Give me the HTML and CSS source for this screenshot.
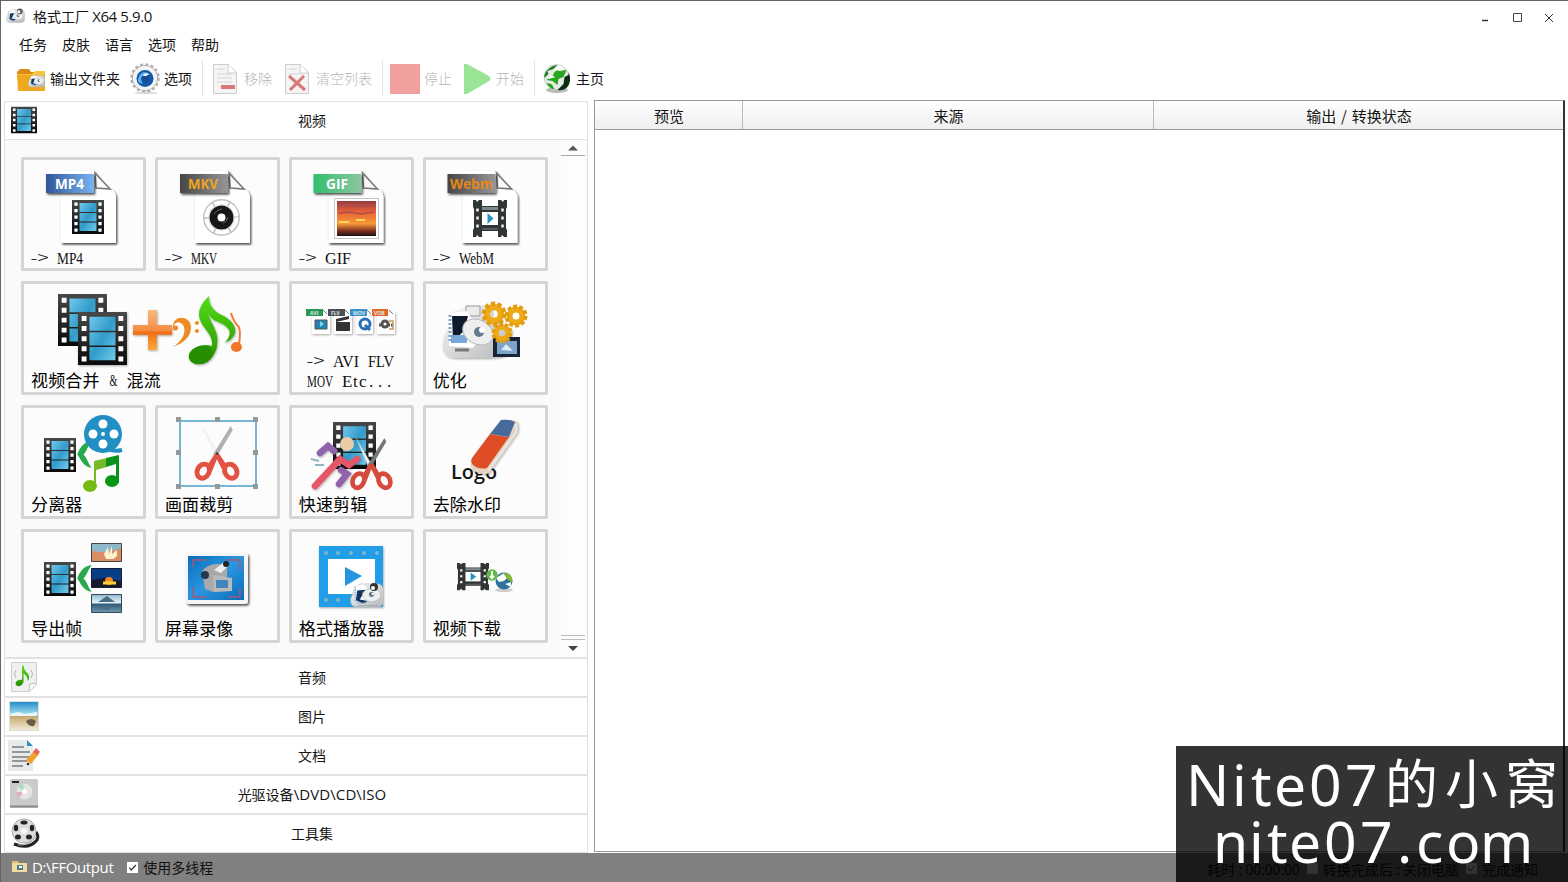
FILE: index.html
```html
<!DOCTYPE html>
<html lang="zh-CN">
<head>
<meta charset="utf-8">
<title>格式工厂 X64 5.9.0</title>
<link rel="stylesheet" href="styles.css">
</head>
<body>
<svg class="defs" width="0" height="0" aria-hidden="true">
<defs>
<linearGradient id="blue" x1="0" y1="0" x2="1" y2="1"><stop offset="0" stop-color="#70c8ee"/><stop offset=".5" stop-color="#329bc9"/><stop offset="1" stop-color="#70cced"/></linearGradient>
<linearGradient id="dark" x1="0" y1="0" x2="0" y2="1"><stop offset="0" stop-color="#484848"/><stop offset="1" stop-color="#080808"/></linearGradient>
<linearGradient id="tagBlue"><stop offset="0" stop-color="#31579c"/><stop offset="1" stop-color="#77b4ef"/></linearGradient>
<linearGradient id="tagGrey"><stop offset="0" stop-color="#464646"/><stop offset="1" stop-color="#969696"/></linearGradient>
<linearGradient id="tagGreen"><stop offset="0" stop-color="#32bf6d"/><stop offset="1" stop-color="#8cc6a2"/></linearGradient>
<linearGradient id="sunset" x1="0" y1="0" x2="0" y2="1"><stop offset="0" stop-color="#923c40"/><stop offset=".3" stop-color="#e75f34"/><stop offset=".65" stop-color="#f79a38"/><stop offset=".85" stop-color="#813023"/><stop offset="1" stop-color="#1b1114"/></linearGradient>
<linearGradient id="orange" x1="0" y1="0" x2="0" y2="1"><stop offset="0" stop-color="#f9bb7e"/><stop offset=".52" stop-color="#f48a40"/><stop offset=".55" stop-color="#ef6d16"/><stop offset="1" stop-color="#fbab3c"/></linearGradient>
<linearGradient id="green" x1="0" y1="0" x2="0" y2="1"><stop offset="0" stop-color="#53dc18"/><stop offset="1" stop-color="#279100"/></linearGradient>
<linearGradient id="silver" x1="0" y1="0" x2="1" y2="1"><stop offset="0" stop-color="#fafafa"/><stop offset="1" stop-color="#b5b8bb"/></linearGradient>
<linearGradient id="screen" x1="0" y1="0" x2="1" y2="1"><stop offset="0" stop-color="#086dbd"/><stop offset=".5" stop-color="#2b96df"/><stop offset="1" stop-color="#086bba"/></linearGradient>
<linearGradient id="sky" x1="0" y1="0" x2="0" y2="1"><stop offset="0" stop-color="#248dcc"/><stop offset=".45" stop-color="#a9e0ed"/><stop offset=".5" stop-color="#c3a66b"/><stop offset="1" stop-color="#f1e9d7"/></linearGradient>
<linearGradient id="lake" x1="0" y1="0" x2="0" y2="1"><stop offset="0" stop-color="#93b8ce"/><stop offset=".45" stop-color="#e4f0f4"/><stop offset=".55" stop-color="#355c77"/><stop offset="1" stop-color="#7098b0"/></linearGradient>
<filter id="shade" x="-20%" y="-20%" width="150%" height="150%"><feDropShadow dx="1.3" dy="1.7" stdDeviation=".9" flood-opacity=".7"/></filter>
<filter id="softshade" x="-20%" y="-20%" width="150%" height="150%"><feDropShadow dx=".7" dy="1" stdDeviation=".8" flood-opacity=".35"/></filter>
<symbol id="film" viewBox="0 0 32 34" preserveAspectRatio="none"><path fill="url(#dark)" d="M0 0h32v34H0z"/><path fill="url(#blue)" d="M7.5 3h17v9h-17zM7.5 13h17v8.500h-17zM7.500 22.500h17V31h-17z"/><path stroke="#fff" stroke-width="3.200" stroke-dasharray="3.200 3.300" d="M4 2.500v30M28 2.500v30"/></symbol>
<symbol id="playfilm" viewBox="0 0 34 38" preserveAspectRatio="none"><path fill="#303536" d="M0 0h3l1 2 2-2h3v6h16V0h3l2 2 1-2h3v7l-1 2v19l1 2v7h-3l-2-2-1 2h-3v-6H9v6H6l-2-2-1 2H0v-7l1-2V9L0 7z"/><path fill="#7f888c" d="M9 7h16v3H9z"/><path fill="#535b5e" d="M9 28h16v2H9z"/><path fill="#fff" d="M9 12h16v13H9z"/><path fill="#2794bd" d="M14.500 13v11l6-5.500z"/><path stroke="#eee" stroke-width="2.500" stroke-dasharray="3 5" d="M4.500 8.500v24M29.500 8.500v24"/></symbol>
<symbol id="paper" viewBox="0 0 74 76"><g filter="url(#shade)"><path fill="#fff" d="M16 1h33l12 17q11 1 10 13v42H16z"/></g><path fill="#fafafa" stroke="#777" stroke-width="1.600" d="M50 3l15 16-14-1z"/></symbol>
<symbol id="robot" viewBox="0 0 52 38"><path fill="url(#silver)" stroke="#bbb" d="M8 7l8-5h28q7 2 7 11v17q-2 7-8 7H9Q0 36 1 25z"/><path fill="#fff" d="M9 5l12-2 7 9v16H7z"/><path fill="#123862" d="M11 12l13-1-9 15 12 2-7 4-11-5z"/><path stroke="#6fa0d0" stroke-width="2" stroke-dasharray="2 2" d="M8 6v24M11 31h14"/><ellipse cx="33" cy="19" rx="14" ry="10" fill="#edf0f1" stroke="#aeb5b9"/><circle cx="33" cy="18" r="4" fill="#67788a"/><circle cx="35" cy="17" r="2" fill="#fff"/><path stroke="#999" d="M12 35h31"/></symbol>
<symbol id="chevron" viewBox="0 0 14 28"><path fill="#29a94e" d="M14 1C5 2 2 9 0 14c3 3 4 11 14 13-4-5-4-9-8-13 4-4 4-8 8-13z"/></symbol>
<symbol id="scissors" viewBox="0 0 46 58"><path fill="#f4f4f3" stroke="#e9e9e7" stroke-width=".5" d="M9 3l17 28-4 2z"/><path fill="#aeb0b2" d="M37 1l2 4-16 27-4-2z"/><g fill="none" stroke="#e25243" stroke-width="5"><ellipse cx="9" cy="47" rx="6" ry="7.500" transform="rotate(28 9 47)"/><ellipse cx="37" cy="47" rx="6" ry="7.500" transform="rotate(-28 37 47)"/></g><path fill="#e25243" d="M21 29l3 3-6 15-5-6zM25 29l8 12-5 4-7-14z"/><circle cx="23" cy="29" r="1.300" fill="#333"/></symbol>
<symbol id="gear" viewBox="-12 -12 24 24"><circle r="6.500" fill="none" stroke="#edaa16" stroke-width="6"/><circle r="9.500" fill="none" stroke="#e29c10" stroke-width="4" stroke-dasharray="3.700 2.270"/></symbol>
<symbol id="globe" viewBox="0 0 30 30"><circle cx="15" cy="14" r="12.500" fill="#e4ece4" stroke="#bbb" stroke-width=".6"/><path fill="#2b7d2e" d="M5 8q5-6 11-6l-4 4-6 2 1 3-4 4Q2 12 5 8z"/><path fill="#0d2c10" d="M27 9q4 9-2 16-4 3-9 2l6-6 1-7 4-2z"/><path fill="#27a820" d="M13 9l5-3 7 1-3 7-5 2-1 6-5-4-6-1 6-4zM5 20l5 1 3 5Q8 26 5 20z"/><path fill="#fff" d="M18 2l6 5-6 1-5-2zM9 12l5 2-7 2z"/></symbol>
<symbol id="note" viewBox="0 0 24 32"><path fill="url(#green)" d="M10 2h2q1 8 6 11 4 6 0 11 0-8-6-11v12q-2 6-8 6-4-1-3-5 2-5 9-4z"/></symbol>
</defs>
</svg>
<div class="window">
<header class="titlebar">
<svg class="app-icon" viewBox="0 0 20 20"><use href="#robot" x="0" y="1" width="20" height="17"/><circle cx="14.500" cy="4.500" r="3" fill="#555a5c"/><circle cx="13.500" cy="5" r="1.600" fill="#fff"/></svg>
<h1 class="title">格式工厂 <span class="ui">X64 5.9.0</span></h1>
<svg class="controls" viewBox="1476 8 84 18"><path stroke="#333" stroke-width="1.500" d="M1482 20.500h6"/><path fill="none" stroke="#444" d="M1513.500 13.500h8v8h-8z"/><path stroke="#333" d="M1545 14l8 8m0-8l-8 8"/></svg>
</header>
<nav class="menu"><span>任务</span><span>皮肤</span><span>语言</span><span>选项</span><span>帮助</span></nav>
<div class="toolbar">
<div class="tool"><svg viewBox="16 62 32 32"><path fill="#d98b13" d="M17 72l3-3h9l2 3h14v19H19z"/><path fill="#efa921" d="M17 75h28v16H18z"/><path fill="#f8c440" d="M17 74h15l3-3h10v4H17z"/><use href="#robot" x="28" y="74" width="17" height="14"/></svg><span>输出文件夹</span></div>
<div class="tool"><svg viewBox="130 62 32 32"><ellipse cx="146" cy="93" rx="12" ry="1.500" fill="#ddd"/><circle cx="145" cy="78" r="12.500" fill="#f4f4f4" stroke="#aaa"/><circle cx="145" cy="78" r="13.500" fill="none" stroke="#b1b1b1" stroke-width="2.500" stroke-dasharray="3 2.300"/><circle cx="145" cy="78" r="12" fill="#f4f4f4"/><circle cx="145" cy="78.500" r="8.500" fill="#1458ab"/><path fill="#62b6ef" d="M138 80c1-8 8-10 12-5-9-1-11 3-7 9-4-1-5-2-5-4z"/><circle cx="146" cy="79" r="3.500" fill="#194c91"/><path fill="#fff" d="M143 76q1-4 6-2l-3 2z"/></svg><span>选项</span></div>
<i class="sep"></i>
<div class="tool off"><svg viewBox="210 62 32 32"><path fill="#f4f4f4" stroke="#ccc" d="M213.500 64.500h15l8 8v21h-23z"/><path fill="#fff" stroke="#ccc" d="M228 64v9h8"/><path stroke="#dedede" stroke-width="1.500" d="M217 69h8m-8 5h15m-15 4h15m-15 4h15"/><path fill="#dc7878" d="M221 85h14v4h-14z"/></svg><span>移除</span></div>
<div class="tool off"><svg viewBox="282 62 32 32"><path fill="#f4f4f4" stroke="#ccc" d="M285.500 64.500h15l8 8v21h-23z"/><path fill="#fff" stroke="#ccc" d="M300 64v9h8"/><path stroke="#dedede" stroke-width="1.500" d="M289 69h8m-8 5h15"/><path stroke="#d87878" stroke-width="3" d="M289 76l16 14m-1-14l-14 14"/></svg><span>清空列表</span></div>
<i class="sep"></i>
<div class="tool off"><svg viewBox="390 62 32 32"><path fill="#f2a09e" d="M390 64h30v30h-30z"/></svg><span>停止</span></div>
<div class="tool off"><svg viewBox="462 62 32 32"><path fill="#99e595" d="M464 64l3 0 22 12q3 3 0 5l-22 13h-3z"/></svg><span>开始</span></div>
<i class="sep"></i>
<div class="tool"><svg viewBox="543 62 32 32"><ellipse cx="558" cy="90" rx="11" ry="3" fill="#bbb"/><use href="#globe" x="542" y="63" width="31" height="30"/></svg><span>主页</span></div>
</div>
<main class="main">
<aside class="sidebar">
<div class="section-head"><svg viewBox="5 102 38 38"><use href="#film" x="11" y="106.500" width="26" height="27"/></svg><span>视频</span></div>
<div class="gallery">
<div class="tiles">
<div class="tile"><svg viewBox="24 160 119 108"><use href="#paper" x="45" y="170" width="74" height="76"/><path filter="url(#shade)" fill="url(#tagBlue)" d="M46 174h48v19H46z"/><text x="55" y="189" class="tag" fill="#fff" textLength="29" lengthAdjust="spacingAndGlyphs">MP4</text><use href="#film" x="72" y="200" width="32" height="34"/><text class="arrow" x="30.500" y="264" textLength="18" lengthAdjust="spacingAndGlyphs">-&gt;</text><text class="latin" x="57" y="264" textLength="26" lengthAdjust="spacingAndGlyphs">MP4</text></svg></div>
<div class="tile"><svg viewBox="158 160 119 108"><use href="#paper" x="179" y="170" width="74" height="76"/><path filter="url(#shade)" fill="url(#tagGrey)" d="M180 174h48v19h-48z"/><text x="188" y="189" class="tag" fill="#f0a520" textLength="30" lengthAdjust="spacingAndGlyphs">MKV</text><g fill="none"><circle cx="221.500" cy="217.500" r="15.500" stroke="#c2c2c2" stroke-width="6"/><circle cx="221.500" cy="217.500" r="15" stroke="#fff" stroke-width="4" stroke-dasharray="14 1.700"/><circle cx="221.500" cy="217.500" r="8" stroke="#171717" stroke-width="8"/><path stroke="#666" d="M214 214q4-5 8-5m6 8q-1 5-5 6"/></g><text class="arrow" x="164.500" y="264" textLength="18" lengthAdjust="spacingAndGlyphs">-&gt;</text><text class="latin" x="191" y="264" textLength="26" lengthAdjust="spacingAndGlyphs">MKV</text></svg></div>
<div class="tile"><svg viewBox="292 160 119 108"><use href="#paper" x="312.500" y="170" width="74" height="76"/><path filter="url(#shade)" fill="url(#tagGreen)" d="M313.500 174h48v19h-48z"/><text x="326" y="189" class="tag" fill="#fff" textLength="22" lengthAdjust="spacingAndGlyphs">GIF</text><path fill="#fff" stroke="#aaa" stroke-width=".7" d="M334.500 198.500h44v40h-44z"/><path fill="url(#sunset)" d="M337 201h39v35h-39z"/><path fill="none" stroke="#ad4c4d" stroke-width="1.500" d="M338 206l11-2 11 3 15-3M339 213l12-1 9 2 14-2"/><path stroke="#fbd45b" stroke-width="2" d="M339 222h10m7-2h9"/><text class="arrow" x="298.500" y="264" textLength="18" lengthAdjust="spacingAndGlyphs">-&gt;</text><text class="latin" x="325" y="264" textLength="26" lengthAdjust="spacingAndGlyphs">GIF</text></svg></div>
<div class="tile"><svg viewBox="426 160 119 108"><use href="#paper" x="446.500" y="170" width="74" height="76"/><path filter="url(#shade)" fill="url(#tagGrey)" d="M447.500 174h48v19h-48z"/><text x="450" y="189" class="tag" fill="#e88718" textLength="43" lengthAdjust="spacingAndGlyphs">Webm</text><use href="#playfilm" x="473" y="200" width="34" height="38"/><text class="arrow" x="432.500" y="264" textLength="18" lengthAdjust="spacingAndGlyphs">-&gt;</text><text class="latin" x="459" y="264" textLength="35" lengthAdjust="spacingAndGlyphs">WebM</text></svg></div>
<div class="tile wide"><svg viewBox="24 284 253 108"><use href="#film" x="58" y="294" width="49" height="52"/><g filter="url(#softshade)"><use href="#film" x="78" y="312" width="49" height="53"/></g><g filter="url(#softshade)"><path fill="url(#orange)" d="M148 310h9v15h15v10h-15v15h-9v-15h-15v-10h15z"/></g><path fill="#ef8a25" d="M173 328c-1-14 17-13 18-2 1 10-7 17-18 21 9-6 13-13 11-20-2-6-9-6-10-1 3-2 6 2 3 4-3 2-4-1-4-2z"/><circle cx="197" cy="323" r="2" fill="#ef8a25"/><circle cx="197" cy="331" r="2" fill="#ef8a25"/><g filter="url(#softshade)"><path fill="url(#green)" d="M209 296c0 11 6 16 15 20 14 8 16 20 1 27 10-12 3-17-9-22-3-1-7-5-8-8 3 12 12 18 9 34-3 12-11 18-20 17-10-2-11-11-2-16 5-3 11-4 17-2 2-13-12-18-13-31 0-8 5-14 10-19z"/><ellipse cx="201" cy="355" rx="12" ry="9" fill="#258f00" transform="rotate(-18 201 355)"/></g><path fill="none" stroke="#f4763b" stroke-width="2" d="M231 313q3 9 8 14 2 6 0 18"/><ellipse cx="236.500" cy="347" rx="5.500" ry="5" fill="#f17427"/></svg><p>视频合并 <svg class="amp" viewBox="0 0 9 20"><text class="latin" x=".5" y="16" textLength="8" lengthAdjust="spacingAndGlyphs">&amp;</text></svg> 混流</p></div>
<div class="tile"><svg viewBox="292 284 119 108"><g filter="url(#softshade)" fill="#fff"><path d="M312 312h18v22h-18zM334 312h18v22h-18zM356 312h17v22h-17zM377 312h18v22h-18z"/></g><path fill="#299656" d="M306 309h17v7h-17z"/><path fill="#4c4f51" d="M328 309h17v7h-17z"/><path fill="#3a91cd" d="M350 309h17v7h-17z"/><path fill="#e8672b" d="M372 309h16v7h-16z"/><g class="mini"><text x="310" y="315">AVI</text><text x="331" y="315">FLV</text><text x="353" y="315">MOV</text><text x="374" y="315">VOB</text></g><path fill="none" stroke="#777" d="M323 310l4 4m18-4l4 4m18-4l4 4m18-4l4 4"/><path fill="#2485b2" stroke="#555" stroke-width="1" d="M315 320h12v9h-12z"/><path fill="#83d4ed" d="M320 321v6l4-3z"/><path fill="#333" d="M336 322h14v9h-14zM336 319l13-3v3l-13 3z"/><circle cx="365" cy="324" r="5" fill="none" stroke="#2871b7" stroke-width="3"/><path stroke="#2871b7" stroke-width="3" d="M365 325l5 5"/><path stroke="#555" stroke-width="3" stroke-dasharray="2 1" d="M379 325h14"/><circle cx="385" cy="324" r="4.500" fill="#555"/><circle cx="385" cy="324" r="1.500" fill="#fff"/><path fill="none" stroke="#c59a55" stroke-width="1.500" d="M389 321h4v8h-4"/><text class="arrow" x="306.500" y="367" textLength="18" lengthAdjust="spacingAndGlyphs">-&gt;</text><text class="latin" x="333" y="367" textLength="26" lengthAdjust="spacingAndGlyphs">AVI</text><text class="latin" x="368" y="367" textLength="26" lengthAdjust="spacingAndGlyphs">FLV</text><text class="latin" x="307" y="387" textLength="26" lengthAdjust="spacingAndGlyphs">MOV</text><text class="latin" x="342 353 359 369 378 387" y="387">Etc...</text></svg></div>
<div class="tile"><svg viewBox="426 284 119 108"><g filter="url(#softshade)"><path fill="url(#silver)" d="M450 313l20-7h22v10l20 14-4 24q-5 4-24 4h-29q-13-1-12-14 1-12 7-17z"/></g><path fill="#ececec" stroke="#999" d="M466 306h14v10h-14z"/><path fill="#fff" d="M449 314l18-3 15 25-9 12-24-2z"/><path fill="#0d1b2d" d="M452 316h16l-4 15-11 10z"/><path fill="#7aa7da" d="M451 335h16v8h-16z"/><path stroke="#7ba4cc" stroke-width="3" stroke-dasharray="2 2" d="M450 315v28"/><ellipse cx="478" cy="332" rx="16" ry="12" fill="#eee" stroke="#bbb" transform="rotate(27 478 332)"/><circle cx="479" cy="332" r="5" fill="#67798d"/><circle cx="482" cy="330" r="3" fill="#fff"/><path stroke="#777" stroke-width="3" d="M455 350h14"/><path fill="#182536" d="M493 337h27v20h-27z"/><path fill="#7ca4ca" d="M497 341h20v13h-20z"/><path fill="#dcecf4" d="M501 350l5-6 7 7z"/><use href="#gear" x="481" y="301" width="26" height="26"/><use href="#gear" x="504" y="304" width="24" height="24"/><use href="#gear" x="491" y="322" width="22" height="22"/></svg><p>优化</p></div>
<div class="tile"><svg viewBox="24 408 119 108"><use href="#film" x="44" y="438" width="32" height="34"/><use href="#chevron" x="77" y="440" width="15" height="29"/><circle cx="103" cy="434" r="19" fill="#218ec4"/><path fill="none" stroke="#218ec4" stroke-width="4" d="M108 449q6 3 14 1"/><g fill="#fff"><circle cx="103" cy="424" r="4.500"/><circle cx="93" cy="434" r="4.500"/><circle cx="114" cy="434" r="4.500"/><circle cx="103" cy="444" r="4.500"/><circle cx="103" cy="434" r="2"/></g><path fill="#78b92b" d="M94 461l13-3v9l-11 3v17h-2z"/><path fill="#099219" d="M106 458l13-3v28h-3v-19l-10 3z"/><ellipse cx="90" cy="486" rx="7" ry="6" fill="#74bc14"/><ellipse cx="112" cy="481" rx="7" ry="6" fill="#079516"/></svg><p>分离器</p></div>
<div class="tile"><svg viewBox="158 408 119 108"><path fill="none" stroke="#76b7d8" stroke-width="2" d="M180 421h76v65h-76z"/><path fill="#969999" d="M176 417h5v5h-5zm39 0h5v5h-5zm38 0h5v5h-5zm-77 33h5v5h-5zm77 0h5v5h-5zm-77 34h5v5h-5zm39 0h5v5h-5zm38 0h5v5h-5z"/><use href="#scissors" x="194" y="425" width="46" height="57"/></svg><p>画面裁剪</p></div>
<div class="tile"><svg viewBox="292 408 119 108"><use href="#film" x="333" y="422" width="43" height="47"/><circle cx="347" cy="444" r="7" fill="#e9cba6"/><g filter="url(#softshade)" fill="none" stroke-linecap="round" stroke-width="6.500"><path stroke="#9064aa" d="M320 453l8-7 6 5M341 470l6 4-8 10"/><path stroke="#e55668" d="M315 486l25-27 9 6 8-6"/></g><path stroke="#8eb4bd" stroke-width="2" d="M311 459l8 2m-4 4h9"/><g transform="translate(350 437) scale(.93)"><path fill="#eef0f1" stroke="#bbb" stroke-width=".5" d="M7 2l17 29-4 2z"/><path fill="#777" d="M37 1l2 4-16 27-4-2z"/><g fill="none" stroke="#d54b3e" stroke-width="5"><ellipse cx="9" cy="47" rx="6" ry="8" transform="rotate(25 9 47)"/><ellipse cx="37" cy="47" rx="6" ry="8" transform="rotate(-28 37 47)"/></g><path fill="#d54b3e" d="M21 28l3 4-6 15-5-6zM25 28l8 13-5 4-7-14z"/></g></svg><p>快速剪辑</p></div>
<div class="tile"><svg viewBox="426 408 119 108"><text x="451" y="479" class="logo" textLength="46" lengthAdjust="spacingAndGlyphs">Logo</text><g filter="url(#softshade)"><path fill="#e5d3bd" d="M502 420q13-1 16 3v9l-29 41q-5 3-15-2-5-4-2-8z"/><path fill="#df4e26" d="M490 434q9 2 19 3l-22 31q-8 2-14-3-3-3-1-7z"/><path fill="#476b9d" d="M490 434l11-14q9-1 14 2l-6 15z"/></g><path fill="none" stroke="#e6e8ed" stroke-width="2" d="M488 471l28-39v-8"/></svg><p>去除水印</p></div>
<div class="tile"><svg viewBox="24 532 119 108"><use href="#film" x="44" y="562" width="32" height="34"/><use href="#chevron" x="77" y="564" width="15" height="29"/><path fill="#d98d65" stroke="#444" d="M91.500 543.500h30v18h-30z"/><path fill="#8eb9c8" d="M92 544h29v4q-14 6-29 3z"/><path fill="#fff2ce" d="M104 554l4-7 1 7 3-8v8l5-4v6l-4 3h-7z"/><path fill="#073e86" stroke="#181d36" d="M91.500 568.500h30v19h-30z"/><path fill="#18192b" d="M92 580l12-2 17 3v6H92z"/><circle cx="109" cy="581" r="4" fill="#f08b24"/><path stroke="#ffd03b" stroke-width="3" d="M103 583h13"/><path fill="url(#lake)" stroke="#34495a" d="M91.500 594.500h30v18h-30z"/><path fill="#466d85" d="M98 602l9-6 8 6zM97 607h17l-7 3z"/></svg><p>导出帧</p></div>
<div class="tile"><svg viewBox="158 532 119 108"><g filter="url(#shade)"><rect x="186" y="553" width="62" height="51" rx="3" fill="#f4f5f6"/></g><path fill="url(#screen)" d="M188 556h56v44h-56z"/><path fill="none" stroke="#a45a75" stroke-width="1.500" d="M193 567v-7h13m21 0h13v10m0 18v9h-12m-22 0h-13v-10"/><path fill="#a7a9ab" d="M202 571q7-8 17-7l8 3v22l-14 3-8-3z"/><path fill="#eee" d="M214 570l10-8 4 4-7 7z"/><path fill="#bababa" d="M213 575l19 3v13l-18 1z"/><path fill="#4384ba" d="M216 580h12v8h-12z"/><circle cx="205" cy="575" r="4" fill="#27384c"/><circle cx="226" cy="564" r="3" fill="#222"/></svg><p>屏幕录像</p></div>
<div class="tile"><svg viewBox="292 532 119 108"><g filter="url(#softshade)"><path fill="#239de7" d="M319 546h64v61h-64z"/></g><path fill="#fff" d="M328 559h47v35h-47z"/><g fill="#7db5cb"><circle cx="326" cy="553" r="2"/><circle cx="338" cy="553" r="2"/><circle cx="351" cy="553" r="2"/><circle cx="364" cy="553" r="2"/><circle cx="377" cy="553" r="2"/><circle cx="326" cy="600" r="2"/><circle cx="338" cy="600" r="2"/></g><path fill="#2396dd" d="M345 567v19l17-10z"/><use href="#robot" x="350" y="582" width="34" height="26"/><circle cx="374" cy="587" r="4" fill="#333"/><circle cx="373" cy="588" r="2" fill="#fff"/></svg><p>格式播放器</p></div>
<div class="tile"><svg viewBox="426 532 119 108"><use href="#playfilm" x="457" y="563" width="32" height="28"/><ellipse cx="504" cy="590" rx="9" ry="2" fill="#ccc"/><circle cx="504" cy="581" r="8.500" fill="#2d719b"/><path fill="#fff" d="M496 578l8-5 4 4-4 4-5 1zM505 584l6-2v5z"/><path fill="#83b935" d="M503 573q10 0 9 9l-4-2z"/><circle cx="492" cy="575" r="5.700" fill="#5eb947"/><path stroke="#fff" stroke-width="2" d="M492 571v7m-2-2l2 2 2-2"/></svg><p>视频下载</p></div>
</div>
<div class="scrollbar"><svg viewBox="561 140 24 17"><path fill="#555" d="M568 150.500h10l-5-5z"/><path stroke="#aaa" d="M561 155.500h24"/></svg><svg viewBox="561 633 24 24"><path fill="none" stroke="#bbb" d="M561 635.500h24M561 639.500h24"/><path fill="#444" d="M568 646h10l-5 5z"/></svg></div>
</div>
<div class="section-head"><svg viewBox="5 659 38 38"><path fill="#eff1f1" stroke="#ccc" d="M11.500 662.500h25v22l-7 7h-18z"/><path fill="#fff" stroke="#bbb" d="M29 691l1-7 6-1"/><use href="#note" x="15" y="664" width="17" height="23"/><path fill="none" stroke="#b7b7b7" d="M16 670q-3 4 0 8m15-8q3 4 0 8"/></svg><span>音频</span></div>
<div class="section-head"><svg viewBox="5 698 38 38"><path fill="url(#sky)" d="M10 702h28v28H10z"/><path fill="#e9f7f9" d="M10 714l8-2 7 2 12-2v4H10z"/><path fill="#685c4b" d="M26 721q5-4 10 0l-2 5q-6 1-8-5z"/><path fill="none" stroke="#ddd" d="M9.500 701.500h29v29h-29z"/></svg><span>图片</span></div>
<div class="section-head"><svg viewBox="5 737 38 38"><path fill="#e8ebec" d="M8 740h19l6 6v25H8z"/><path fill="#358dbd" d="M27 740v6h6z"/><path stroke="#777c80" stroke-width="1.300" d="M12 747h12m-12 5h18m-18 5h18m-18 4h15m-15 5h11"/><path fill="#efa22d" d="M35 750l4 4-8 10-5-4z"/><path fill="#e86156" d="M36 748l4 4-3 3-4-3z"/><circle cx="28" cy="764" r="1.300" fill="#333"/></svg><span>文档</span></div>
<div class="section-head"><svg viewBox="5 776 38 38"><rect x="10" y="779" width="28" height="29" rx="2" fill="#c9cbc9"/><path fill="#232323" d="M12 781h7v2h-7z"/><circle cx="24.500" cy="791.500" r="8" fill="#e2e5e3"/><path fill="#abdabd" d="M18 787l6 4-1-8z"/><path fill="#e1aac8" d="M16 792l7 0-4 6z"/><circle cx="24.500" cy="791.500" r="2.500" fill="#fff"/><path stroke="#888" stroke-width="2" d="M10 806.500h28"/></svg><span>光驱设备<span class="ui disc">\DVD\CD\ISO</span></span></div>
<div class="section-head"><svg viewBox="5 814 38 38"><path fill="none" stroke="#222" stroke-width="3" d="M14 843q15 6 23-4 2-4-1-8"/><path stroke="#aaa" fill="none" d="M18 844q11 1 18-8"/><circle cx="24" cy="830" r="12" fill="#ddd" stroke="#aaa"/><g fill="#242424"><ellipse cx="24" cy="821.500" rx="3.500" ry="2"/><ellipse cx="16" cy="827" rx="2.200" ry="3.300"/><ellipse cx="32" cy="827" rx="2.200" ry="3.300"/><ellipse cx="18" cy="836" rx="3" ry="2.500"/><ellipse cx="29" cy="836" rx="3" ry="2.500"/></g><circle cx="24" cy="830" r="3" fill="#f9f9f9"/></svg><span>工具集</span></div>
</aside>
<section class="tasks"><div class="columns"><span>预览</span><span>来源</span><span>输出 / 转换状态</span></div></section>
</main>
<footer class="status"><svg class="folder" viewBox="12 859 17 16"><path fill="#dfc16f" d="M12 861h6l1 2h8v9H13z"/><path fill="#f0da9d" d="M12 863h15v9H12z"/><path fill="#53799b" d="M17 865h6v5h-6z"/><path fill="#fff" d="M19 866h3v2h-3z"/></svg><span class="ui path">D:\FFOutput</span><i class="check"><svg viewBox="0 0 11 11"><path fill="none" stroke="#333" stroke-width="1.200" d="M2.200 5.500l2 2.500L9 3"/></svg></i><span>使用多线程</span>
<span class="right"><span>耗时 : 00:00:00</span><i class="check"></i><span>转换完成后 : 关闭电脑</span><i class="check"><svg viewBox="0 0 11 11"><path fill="none" stroke="#333" d="M2 5l2 3 5-5"/></svg></i><span>完成通知</span></span></footer>
<div class="watermark"><svg viewBox="1176 746 392 136"><text class="wm" y="805.500" x="1186 1232 1251 1274 1309 1345">Nite07</text><text class="wm zh" y="804" x="1385 1445 1505">的小窝</text><text class="wm" y="862.500" x="1213 1249 1267 1289 1324 1360 1397 1416 1446 1480">nite07.com</text></svg></div>
</div>
</body>
</html>
```
FILE: styles.css
```css
* { box-sizing: border-box; }
body { margin: 0; background: #fff; color: #151515; font: 14px/20px "Noto Sans CJK SC", sans-serif; }
.defs { position: absolute; }
svg { display: block; flex: none; }
.window { position: relative; display: flex; flex-direction: column; width: 1568px; height: 882px; overflow: hidden; border-top: 1px solid #656565; border-left: 1px solid #656565; }
.ui { font-family: "Open Sans", "Noto Sans CJK SC", sans-serif; font-size: 15px; line-height: 18px; letter-spacing: -.4px; }

.titlebar { display: flex; align-items: center; height: 32px; padding: 0 8px 2px 5px; }
.app-icon { width: 19px; height: 19px; }
.title { flex: 1; margin: 0 0 0 8px; font-size: 14px; font-weight: 400; }
.controls { width: 84px; height: 18px; margin-top: 1px; }
.menu { display: flex; gap: 15px; height: 26px; padding: 1px 0 0 18px; }
.menu span { line-height: 21px; }
.toolbar { display: flex; align-items: center; height: 41px; padding: 0 0 3px 15px; }
.tool { display: flex; align-items: center; gap: 2px; margin-right: 10px; }
.tool svg { width: 32px; height: 32px; }
.tool.off { color: #b6b6b6; font-weight: 300; }
.sep { width: 1px; height: 36px; margin-right: 7px; background: #e3e3e3; }

.main { display: flex; height: 753px; padding: 1px 0 0 3px; }
.sidebar { width: 584px; border: 1px solid #e1e1e1; border-top: 0; }
.section-head { display: flex; align-items: center; height: 39px; border-bottom: 2px solid #e2e2e2; }
.section-head:first-child { border-top: 1px solid #e3e3e3; border-bottom-width: 1px; }
.section-head:last-child { height: 38px; border-bottom-width: 1px; }
.section-head svg { width: 38px; height: 38px; }
.section-head > span { flex: 1; padding: 0 6px 1px 0; text-align: center; }
.section-head .disc { letter-spacing: .1px; }
.gallery { display: flex; height: 519px; background: #fafafa; border-bottom: 2px solid #e2e2e2; }
.tiles { display: grid; grid-template-columns: repeat(4, 125px); grid-auto-rows: 114px; gap: 10px 8.9px; width: 556px; padding: 17px 0 0 16px; }
.tile { display: grid; border: 3px solid #d5d5d5; border-radius: 2px; background: #fcfcfc; }
.tile > * { grid-area: 1 / 1; }
.tile > svg { width: 100%; height: 108px; }
.tile.wide { grid-column: span 2; }
.tile p { align-self: end; z-index: 1; display: flex; gap: 9px; margin: 0 0 2px 7px; font-size: 17px; letter-spacing: .15px; line-height: 20px; color: #000; }
.amp { width: 9px; height: 20px; overflow: visible; }
.latin { font: 17px "Liberation Serif", serif; fill: #111; }
.arrow { font: 300 17px "Noto Sans CJK SC", sans-serif; fill: #111; }
.tag { font: bold 14px "Open Sans", sans-serif; }
.mini { font: bold 5px "Open Sans", sans-serif; fill: #d9e9e8; }
.logo { font: 600 19px "Open Sans", sans-serif; fill: #161616; }
.scrollbar { display: flex; flex-direction: column; justify-content: space-between; width: 24px; background: #fdfdfd; }
.scrollbar svg:first-child { width: 24px; height: 17px; }
.scrollbar svg:last-child { width: 24px; height: 24px; }

.tasks { flex: none; width: 971px; height: 752px; margin: -1px 0 0 6px; border: 1px solid #999; border-right: 2px solid #333; background: #fff; }
.columns { display: grid; grid-template-columns: 147px 411px 1fr; height: 29px; border-bottom: 1px solid #999; background: linear-gradient(#fff, #efefef); font-size: 15px; line-height: 29px; word-spacing: 1.5px; text-align: center; }
.columns span { height: 28px; padding-left: 1px; }
.columns span + span { border-left: 1px solid #bbb; }

.status { display: flex; align-items: center; height: 29px; padding: 0 0 1px 11px; background: #808080; color: #111; }
.folder { width: 17px; height: 16px; margin-right: 3px; }
.status .path { color: #fff; }
.check { width: 11px; height: 11px; margin: 0 5px 0 14px; background: #fff; }
.right { display: flex; align-items: center; margin: 3px 30px 0 auto; }
.right .check { margin: 0 5px 0 7px; }
.watermark { position: absolute; right: 0; bottom: 0; width: 392px; height: 136px; background: rgba(0, 0, 0, .8); }
.watermark svg { width: 392px; height: 136px; overflow: visible; }
.wm { font: 57px "Noto Sans", sans-serif; fill: #fff; }
.wm.zh { font: 53px "Noto Sans CJK SC", sans-serif; }
```
